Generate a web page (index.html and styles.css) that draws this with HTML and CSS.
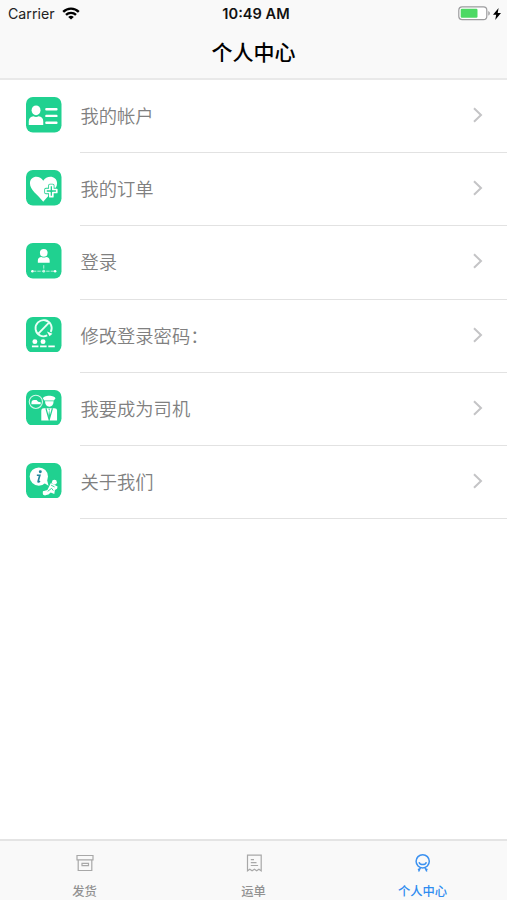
FILE: index.html
```html
<!DOCTYPE html>
<html lang="zh-CN">
<head>
    <meta charset="UTF-8">
    <meta name="viewport" content="width=device-width, initial-scale=1.0">
    <title>个人中心</title>
    <link rel="stylesheet" href="styles.css">
</head>
<body>
    <div class="app">
        <header class="header">
            <div class="status-bar">
                <div class="status-left">
                    <span class="carrier">Carrier</span>
                    <svg class="wifi" viewBox="0 0 18 13" fill="none" stroke="#000" stroke-width="2.4">
                        <path d="M1.2 4.8a11.2 11.2 0 0 1 15.6 0"/>
                        <path d="M4 7.9a7.2 7.2 0 0 1 10 0"/>
                        <path d="M9 12.6 6.2 9.9a4.2 4.2 0 0 1 5.6 0z" fill="#000" stroke="none"/>
                    </svg>
                </div>
                <div class="time">10:49 AM</div>
                <div class="status-right">
                    <svg class="battery" viewBox="0 0 33 15">
                        <rect x=".8" y=".8" width="28" height="12.9" rx="3.4" fill="#fff" stroke="#9c9c9e" stroke-width="1.2"/>
                        <rect x="2.7" y="2.7" width="16.8" height="9.1" rx="1.2" fill="#4cd964"/>
                        <path d="M30.3 5v4.6c2-.8 2-3.8 0-4.6z" fill="#9c9c9e"/>
                    </svg>
                    <svg class="bolt" viewBox="0 0 8 12">
                        <path d="M5.6 0 0 6.8h3.2L2.2 12 8 5H4.7z"/>
                    </svg>
                </div>
            </div>
            <h1 class="title">个人中心</h1>
        </header>

        <main class="menu">
            <a class="row">
                <svg class="row-icon" viewBox="0 0 36 36">
                    <rect width="36" height="36" rx="7" fill="#20d190"/>
                    <g fill="#fff">
                        <ellipse cx="10.2" cy="13.5" rx="4.5" ry="5"/>
                        <path d="M2.8 28.3v-3.6c0-3.2 2-5 4.8-5.2 1.6 1 3.6 1 5.2 0 2.9.2 4.7 2 4.7 5.2v3.6z"/>
                        <rect x="19.5" y="11.2" width="12.5" height="2.4" rx="1"/>
                        <rect x="19.5" y="18" width="12.5" height="2.4" rx="1"/>
                        <rect x="19.5" y="24.9" width="12.5" height="2.4" rx="1"/>
                    </g>
                </svg>
                <span class="row-body">
                    <span class="label">我的帐户</span>
                    <svg class="chevron" viewBox="0 0 10 16"><path d="m1.5 1.3 7 6.7-7 6.7"/></svg>
                </span>
            </a>
            <a class="row">
                <svg class="row-icon" viewBox="0 0 36 36">
                    <rect width="36" height="36" rx="7" fill="#20d190"/>
                    <path d="M17.5 32.3C12 25 4 20.5 4 13.5 4 5.5 14 4.5 17.5 11 21 4.5 31.5 5.5 31.5 13.5c0 7-8.5 11.5-14 18.8z" fill="#fff"/>
                    <path d="M24.2 15.6h3v4.2h4v3h-4v4.2h-3v-4.2h-4v-3h4z" fill="#20d190" stroke="#20d190" stroke-width="3.4" stroke-linejoin="round"/>
                    <path d="M24.2 15.6h3v4.2h4v3h-4v4.2h-3v-4.2h-4v-3h4z" fill="#20d190" stroke="#fff" stroke-width="1.7" stroke-linejoin="round"/>
                </svg>
                <span class="row-body">
                    <span class="label">我的订单</span>
                    <svg class="chevron" viewBox="0 0 10 16"><path d="m1.5 1.3 7 6.7-7 6.7"/></svg>
                </span>
            </a>
            <a class="row">
                <svg class="row-icon" viewBox="0 0 36 36">
                    <rect width="36" height="36" rx="7" fill="#20d190"/>
                    <g fill="#fff">
                        <circle cx="18" cy="10" r="3.9"/>
                        <path d="M12 20v-2.2c0-2.400 1.500-3.700 3.600-3.700 1.500.8 3.300.8 4.800 0 2.200 0 3.600 1.300 3.600 3.700V20z"/>
                        <circle cx="6.5" cy="28.6" r="1.3"/>
                        <circle cx="18" cy="28.6" r="1.3"/>
                        <circle cx="29.5" cy="28.6" r="1.3"/>
                    </g>
                    <path d="M7 28.6h22M18 22.5v6" fill="none" stroke="#b9f2dc" stroke-width="1" stroke-dasharray="3.5 1"/>
                </svg>
                <span class="row-body">
                    <span class="label">登录</span>
                    <svg class="chevron" viewBox="0 0 10 16"><path d="m1.5 1.3 7 6.7-7 6.7"/></svg>
                </span>
            </a>
            <a class="row">
                <svg class="row-icon" viewBox="0 0 36 36">
                    <rect width="36" height="36" rx="7" fill="#20d190"/>
                    <g fill="none" stroke="#e8fff6" stroke-width="1.9">
                        <path d="M21.5 18.7a8.2 8.2 0 1 1 3.6-3.5"/>
                        <path d="m12.3 17.2 11-11.5"/>
                    </g>
                    <path d="m21.2 14.6 5.6 2.3-2.9 2.500z" fill="#fff"/>
                    <g fill="#fff">
                        <circle cx="9" cy="25" r="2.5"/>
                        <circle cx="17.3" cy="25" r="2.5"/>
                        <rect x="6" y="28.9" width="6.6" height="1.8"/>
                        <rect x="14.3" y="28.9" width="6.6" height="1.8"/>
                        <rect x="22.6" y="28.9" width="6.6" height="1.8"/>
                    </g>
                </svg>
                <span class="row-body">
                    <span class="label">修改登录密码：</span>
                    <svg class="chevron" viewBox="0 0 10 16"><path d="m1.5 1.3 7 6.7-7 6.7"/></svg>
                </span>
            </a>
            <a class="row">
                <svg class="row-icon" viewBox="0 0 36 36">
                    <rect width="36" height="36" rx="7" fill="#20d190"/>
                    <circle cx="10" cy="12" r="6.7" fill="none" stroke="#d5f8ea" stroke-width="1.1"/>
                    <path d="M5.5 13c0-1.6 1-2.8 2.7-2.8h2.5l1.6 1.8 2.6.4v2H5.5z" fill="#fff"/>
                    <g fill="#fff">
                        <path d="M17.3 8.5c0-1.5 2.9-2.7 6.2-2.7s6.2 1.2 6.2 2.7l-1.4 2.2h-9.600z"/>
                        <path d="M19.3 11.5h8.7c0 3.500-1.700 5.500-4.300 5.500s-4.400-2-4.400-5.500z"/>
                        <path d="M15.5 31V21c0-1.800 1-2.600 2.600-2.600h10.800c1.600 0 2.600.8 2.600 2.600v10z"/>
                    </g>
                    <path d="m20.2 18.5 3.3 11.7 3.3-11.7" fill="none" stroke="#20d190" stroke-width="1.2"/>
                    <path d="m22.6 19 .8 1.500-.8 6 .9 2 .9-2-.8-6 .8-1.500z" fill="#20d190"/>
                </svg>
                <span class="row-body">
                    <span class="label">我要成为司机</span>
                    <svg class="chevron" viewBox="0 0 10 16"><path d="m1.5 1.3 7 6.7-7 6.7"/></svg>
                </span>
            </a>
            <a class="row">
                <svg class="row-icon" viewBox="0 0 36 36">
                    <rect width="36" height="36" rx="7" fill="#20d190"/>
                    <circle cx="13" cy="13.8" r="9.3" fill="#fff"/>
                    <path d="m18 20 4.8 3-1.5-6z" fill="#fff"/>
                    <circle cx="14.5" cy="8.8" r="1.5" fill="#23869c"/>
                    <path d="M11 12.4h3l-1.7 6.2c-.2.9.5.9 1.9-.2" fill="none" stroke="#23869c" stroke-width="1.7"/>
                    <g fill="#fff">
                        <circle cx="28.8" cy="19.5" r="2.5"/>
                        <path d="m25.2 20.3 6.8 3.6-.5 2.2-2.2 1.4-.6 4-3.600-1.500-2.700 2.200-4.800-.3-.6-3 4.700-1.500z"/>
                        <circle cx="19.3" cy="30.5" r="2.4"/>
                    </g>
                    <path d="m22 28.7 4-3 1.7 2.300M25.500 22.500l3.500 1.800" fill="none" stroke="#20d190" stroke-width=".9"/>
                </svg>
                <span class="row-body">
                    <span class="label">关于我们</span>
                    <svg class="chevron" viewBox="0 0 10 16"><path d="m1.5 1.3 7 6.7-7 6.7"/></svg>
                </span>
            </a>
        </main>

        <nav class="tab-bar">
            <a class="tab">
                <svg class="tab-icon" viewBox="0 0 20 20">
                    <path d="M2 2.500h16v4.300H2zM3.200 6.800v10.700h13.600V6.800M7 10.400h6.500v2.200H7z"/>
                </svg>
                <span>发货</span>
            </a>
            <a class="tab">
                <svg class="tab-icon" viewBox="0 0 20 20">
                    <path d="M3.500 17.800V2.200h13.700v15.600l-2.300-1.500-2.200 1.500-2.300-1.500-2.300 1.500-2.300-1.500zM6.800 6.600H10M6.800 9.700h5.700M6.800 12.500h7.300"/>
                </svg>
                <span>运单</span>
            </a>
            <a class="tab active">
                <svg class="tab-icon" viewBox="0 0 20 20">
                    <circle cx="9.7" cy="8.3" r="6.6"/>
                    <path d="M6 9.200c1.200 3.200 6.200 3.200 7.400 0M7.600 14.500l-2 4M11.800 14.500l2 4M4.900 16.600l2.400-1M14.500 16.600l-2.400-1"/>
                </svg>
                <span>个人中心</span>
            </a>
        </nav>
    </div>
</body>
</html>
```
FILE: styles.css
```css
* {
    box-sizing: border-box;
}
body {
    margin: 0;
    font-family: Inter, "Noto Sans CJK SC", sans-serif;
    background: #fff;
    color: #000;
}
svg {
    display: block;
    flex-shrink: 0;
}
.app {
    display: flex;
    flex-direction: column;
    height: 100vh;
    overflow: hidden;
}
.header {
    height: 80px;
    background: #f9f9f9;
    border-bottom: 2px solid #e9e9e9;
}
.status-bar {
    display: grid;
    grid-template-columns: 1fr auto 1fr;
    align-items: center;
    height: 27px;
    padding: 0 6px 0 8px;
}
.status-left,
.status-right {
    display: flex;
    align-items: center;
}
.status-left {
    gap: 7px;
}
.status-right {
    justify-content: flex-end;
    gap: 2px;
}
.carrier {
    font-size: 14.2px;
    color: #222;
}
.time {
    padding-left: 3px;
    font-size: 14.6px;
    font-weight: 600;
    color: #111;
}
.wifi {
    width: 18px;
    height: 13px;
}
.battery {
    width: 33px;
    height: 15px;
}
.bolt {
    width: 8px;
    height: 12px;
}
.title {
    margin: 0;
    font-size: 21px;
    font-weight: 500;
    line-height: 52px;
    text-align: center;
}
.menu {
    flex: 1;
}
.row {
    display: flex;
    align-items: center;
    height: 73.2px;
    padding-left: 26px;
}
.row-icon {
    width: 35.5px;
    height: 35.5px;
    margin: 0 18.5px 3.6px 0;
}
.row-body {
    display: flex;
    flex: 1;
    align-items: center;
    justify-content: space-between;
    height: 100%;
    padding: 0 24px 2px 0;
    border-bottom: 1px solid #e2e2e2;
}
.label {
    padding-left: 0.5px;
    font-size: 18.3px;
    font-weight: 350;
    color: #808080;
}
.chevron {
    width: 11px;
    height: 16px;
    fill: none;
    stroke: #c4c4c6;
    stroke-width: 2;
}
.tab-bar {
    display: flex;
    height: 61px;
    background: #f9f9f9;
    border-top: 2px solid #e4e4e4;
}
.tab {
    display: flex;
    flex: 1;
    flex-direction: column;
    align-items: center;
    gap: 10px;
    padding-top: 12px;
    font-size: 12.3px;
    font-weight: 500;
    line-height: 18px;
    color: #929292;
}
.tab-icon {
    width: 20px;
    height: 20px;
    fill: none;
    stroke: #a8a8a8;
    stroke-width: 1.2;
}
.active {
    color: #2f8cf0;
}
.active .tab-icon {
    stroke: #3b91f0;
    stroke-width: 1.5;
}
```
